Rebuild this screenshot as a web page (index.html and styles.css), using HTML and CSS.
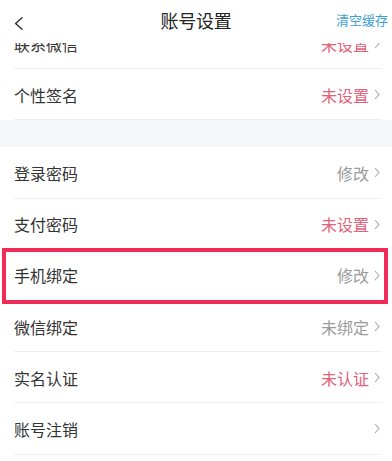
FILE: index.html
```html
<!DOCTYPE html>
<html lang="zh">
<head>
<meta charset="utf-8">
<link rel="stylesheet" href="styles.css">
</head>
<body>
<div class="page">
  <header class="nav">
    <div class="nav-left">
      <svg class="back" width="10" height="13" viewBox="0 0 10 13"><polyline points="8,0.8 1.6,6.5 8,12.2" fill="none" stroke="#333" stroke-width="1.5" stroke-linecap="round" stroke-linejoin="round"/></svg>
    </div>
    <div class="nav-title">账号设置</div>
    <div class="nav-right">清空缓存</div>
  </header>
  <div class="viewport">
    <div class="list">
      <div class="group first">
        <div class="row"><span class="label">联系微信</span><span class="value red">未设置</span><svg class="chev" width="6" height="11" viewBox="0 0 6 11"><polyline points="1,1 5,5.5 1,10" fill="none" stroke="#aaa" stroke-width="1.1"/></svg></div>
        <div class="row"><span class="label">个性签名</span><span class="value red">未设置</span><svg class="chev" width="6" height="11" viewBox="0 0 6 11"><polyline points="1,1 5,5.5 1,10" fill="none" stroke="#aaa" stroke-width="1.1"/></svg></div>
      </div>
      <div class="gap"></div>
      <div class="group">
        <div class="row"><span class="label">登录密码</span><span class="value">修改</span><svg class="chev" width="6" height="11" viewBox="0 0 6 11"><polyline points="1,1 5,5.5 1,10" fill="none" stroke="#aaa" stroke-width="1.1"/></svg></div>
        <div class="row"><span class="label">支付密码</span><span class="value red">未设置</span><svg class="chev" width="6" height="11" viewBox="0 0 6 11"><polyline points="1,1 5,5.5 1,10" fill="none" stroke="#aaa" stroke-width="1.1"/></svg></div>
        <div class="row marked"><span class="label">手机绑定</span><span class="value">修改</span><svg class="chev" width="6" height="11" viewBox="0 0 6 11"><polyline points="1,1 5,5.5 1,10" fill="none" stroke="#aaa" stroke-width="1.1"/></svg><span class="highlight"></span></div>
        <div class="row"><span class="label">微信绑定</span><span class="value">未绑定</span><svg class="chev" width="6" height="11" viewBox="0 0 6 11"><polyline points="1,1 5,5.5 1,10" fill="none" stroke="#aaa" stroke-width="1.1"/></svg></div>
        <div class="row"><span class="label">实名认证</span><span class="value red">未认证</span><svg class="chev" width="6" height="11" viewBox="0 0 6 11"><polyline points="1,1 5,5.5 1,10" fill="none" stroke="#aaa" stroke-width="1.1"/></svg></div>
        <div class="row"><span class="label">账号注销</span><span class="value"></span><svg class="chev" width="6" height="11" viewBox="0 0 6 11"><polyline points="1,1 5,5.5 1,10" fill="none" stroke="#aaa" stroke-width="1.1"/></svg></div>
      </div>
    </div>
  </div>
</div>
</body>
</html>
```
FILE: styles.css
```css
* { box-sizing: border-box; }
html, body {
  margin: 0;
  padding: 0;
  background: #fff;
}
body {
  font-family: "Noto Sans CJK SC", "Noto Sans", sans-serif;
  color: #333;
}
.page {
  width: 392px;
  height: 461px;
  overflow: hidden;
  background: #fff;
}
.nav {
  position: relative;
  z-index: 2;
  height: 43px;
  background: #fff;
  display: grid;
  grid-template-columns: 1fr auto 1fr;
  align-items: center;
}
.nav-left {
  display: flex;
  align-items: center;
  padding-left: 14px;
  padding-top: 3px;
}
.back { display: block; }
.nav-title {
  font-size: 18px;
  line-height: 24px;
  color: #222;
  padding-bottom: 3px;
  letter-spacing: -0.3px;
}
.nav-right {
  text-align: right;
  font-size: 13px;
  line-height: 18px;
  color: #3c9fd2;
  padding-right: 4px;
  padding-bottom: 3px;
}
.viewport {
  height: 418px;
  overflow: hidden;
}
.list {
  margin-top: -25px;
}
.row {
  position: relative;
  height: 51.2px;
  margin: 0 10px 0 14px;
  border-bottom: 1px solid #efefef;
  display: flex;
  align-items: center;
}
.label {
  flex: 1;
  font-size: 16px;
  line-height: 22px;
  color: #333;
  padding-top: 1px;
}
.value {
  font-size: 16px;
  line-height: 22px;
  color: #9b9b9b;
  margin-right: 5px;
  padding-top: 1px;
}
.value.red { color: #e2627a; }
.chev {
  display: block;
  margin-right: 2px;
  margin-top: 1px;
}
.gap {
  height: 27px;
  background: #f5f6f8;
}
.highlight {
  position: absolute;
  left: -12px;
  right: -6px;
  top: -2px;
  bottom: -4px;
  border: 4px solid #ee2c57;
  pointer-events: none;
}
```
